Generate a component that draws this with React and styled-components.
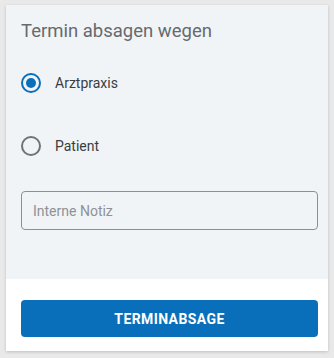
import React, { useState } from "react";
import styled, { createGlobalStyle } from "styled-components";

const GlobalStyle = createGlobalStyle`
  html, body {
    margin: 0;
    padding: 0;
    background: #e9e9e9;
    font-family: Roboto, "Liberation Sans", Arial, sans-serif;
  }
`;

const Page = styled.div`
  padding: 5px 6px 7px 6px;
`;

const Card = styled.div`
  width: 322px;
  height: 346px;
  display: flex;
  flex-direction: column;
  background: #ffffff;
  box-shadow: 0 1px 3px rgba(0, 0, 0, 0.18);
`;

const Body = styled.div`
  flex: 1;
  display: flex;
  flex-direction: column;
  background: #f1f4f7;
  padding: 15px 10px 0 15px;
`;

const Title = styled.h2`
  margin: 0;
  font-size: 18.5px;
  line-height: 22px;
  font-weight: 400;
  color: #666a6e;
`;

const Options = styled.div`
  display: flex;
  flex-direction: column;
  gap: 23px;
  margin-top: 21px;
`;

const Option = styled.label`
  display: flex;
  align-items: center;
  height: 40px;
  gap: 14px;
  cursor: pointer;
  font-size: 14px;
  color: #3a3d40;
`;

const Radio = styled.span`
  box-sizing: border-box;
  width: 20px;
  height: 20px;
  border-radius: 50%;
  border: 2px solid ${(p) => (p.$checked ? "#0a6fba" : "#6f7377")};
  display: flex;
  align-items: center;
  justify-content: center;

  &::after {
    content: "";
    width: 10px;
    height: 10px;
    border-radius: 50%;
    background: #0a6fba;
    display: ${(p) => (p.$checked ? "block" : "none")};
  }
`;

const NoteInput = styled.input`
  box-sizing: border-box;
  margin-top: 25px;
  width: 297px;
  height: 39px;
  padding: 0 11px;
  border: 1px solid #8c9094;
  border-radius: 4px;
  background: transparent;
  font-family: inherit;
  font-size: 14px;
  color: #3a3d40;
  outline: none;

  &::placeholder {
    color: #8e9296;
  }
`;

const Footer = styled.div`
  height: 72px;
  padding: 21px 10px 0 15px;
  box-sizing: border-box;
  background: #ffffff;
`;

const Button = styled.button`
  width: 297px;
  height: 37px;
  border: none;
  border-radius: 4px;
  background: #0a6fba;
  color: #ffffff;
  font-family: inherit;
  font-size: 14px;
  font-weight: 700;
  letter-spacing: 0.4px;
  text-transform: uppercase;
  cursor: pointer;
`;

export default function App() {
  const [reason, setReason] = useState("arzt");

  return (
    <Page>
      <GlobalStyle />
      <Card>
        <Body>
          <Title>Termin absagen wegen</Title>
          <Options>
            <Option onClick={() => setReason("arzt")}>
              <Radio $checked={reason === "arzt"} />
              Arztpraxis
            </Option>
            <Option onClick={() => setReason("patient")}>
              <Radio $checked={reason === "patient"} />
              Patient
            </Option>
          </Options>
          <NoteInput placeholder="Interne Notiz" />
        </Body>
        <Footer>
          <Button>Terminabsage</Button>
        </Footer>
      </Card>
    </Page>
  );
}
